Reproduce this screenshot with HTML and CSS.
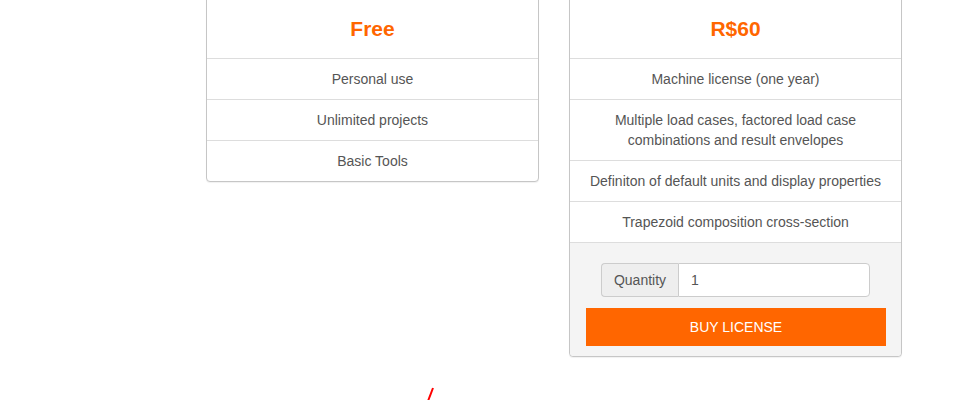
FILE: index.html
```html
<html>

<head>
	<link rel="stylesheet" href="styles.css">
</head>

<body>
	<div class="plans">
		<div class="plan">
			<div class="plan-price">Free</div>
			<ul class="plan-features">
				<li>Personal use</li>
				<li>Unlimited projects</li>
				<li>Basic Tools</li>
			</ul>
		</div>

		<div class="plan">
			<div class="plan-price">R$60</div>
			<ul class="plan-features">
				<li>Machine license (one year)</li>
				<li>Multiple load cases, factored load case combinations and result envelopes</li>
				<li>Definiton of default units and display properties</li>
				<li>Trapezoid composition cross-section</li>
			</ul>
			<div class="plan-footer">
				<div class="qty">
					<span class="qty-label">Quantity</span>
					<input class="qty-input" type="text" value="1">
				</div>
				<button class="buy">BUY LICENSE</button>
			</div>
		</div>
	</div>

	<div class="mark">
		<svg width="12" height="14" viewBox="0 0 12 14">
			<line x1="9" y1="1" x2="4" y2="14" stroke="#f00" stroke-width="2" />
		</svg>
	</div>
</body>

</html>
```

FILE: styles.css
```css
body {
	margin: 0;
	background: #fff;
	color: #555;
	font-family: "Liberation Sans", Arial, sans-serif;
	font-size: 14px;
	line-height: 20px;
}

.plans {
	display: flex;
	align-items: flex-start;
	gap: 30px;
	margin-top: -1px;
	padding-left: 206px;
}

.plan {
	width: 331px;
	border: 1px solid #c6c6c6;
	border-radius: 0 0 4px 4px;
	box-shadow: 0 1px 1px rgba(0, 0, 0, 0.06);
	background: #fff;
	text-align: center;
}

.plan-price {
	height: 58px;
	line-height: 58px;
	font-size: 21px;
	font-weight: bold;
	color: #ff6600;
}

.plan-features {
	list-style: none;
	margin: 0;
	padding: 0;
}

.plan-features li {
	border-top: 1px solid #ddd;
	padding: 10px 15px;
}

.plan-footer {
	border-top: 1px solid #ddd;
	background: #f4f4f4;
	padding: 20px 15px 10px 16px;
	border-radius: 0 0 4px 4px;
}

.qty {
	display: flex;
	height: 34px;
	margin: 0 16px 11px 15px;
}

.qty-label {
	width: 76px;
	background: #eee;
	border: 1px solid #ccc;
	border-right: 0;
	border-radius: 4px 0 0 4px;
	line-height: 32px;
	color: #555;
}

.qty-input {
	flex: 1;
	min-width: 0;
	border: 1px solid #ccc;
	border-radius: 0 4px 4px 0;
	padding: 0 12px;
	font: inherit;
	color: #555;
	background: #fff;
}

.buy {
	display: block;
	width: 100%;
	height: 38px;
	border: 0;
	background: #ff6600;
	color: #fff;
	font: inherit;
	cursor: pointer;
}

.mark {
	margin: 30px 0 0 424px;
	height: 14px;
}
```
